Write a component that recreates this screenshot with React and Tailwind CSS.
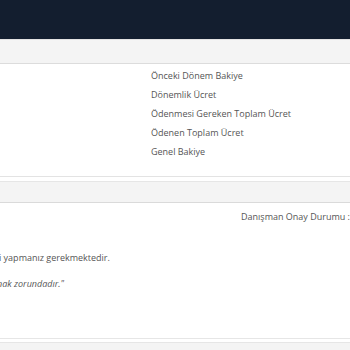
export default function App() {
  const rows = [
    'Önceki Dönem Bakiye',
    'Dönemlik Ücret',
    'Ödenmesi Gereken Toplam Ücret',
    'Ödenen Toplam Ücret',
    'Genel Bakiye',
  ]

  return (
    <div className="w-[350px] h-[350px] overflow-hidden bg-white text-[9px] text-[#555] font-['Open_Sans',sans-serif]">
      {/* Top bar */}
      <div className="h-[39px] bg-[#131e2f]" />

      {/* Fee panel */}
      <div className="border-t border-[#c9ccd0] border-b border-[#e3e3e3]">
        <div className="h-[24px] bg-[#f4f4f4] border-b border-[#dcdcdc]" />
        <div className="pt-[2px] pb-[15px] pl-[151px]">
          {rows.map(r => (
            <div key={r} className="h-[19px] leading-[19px] whitespace-nowrap">{r}</div>
          ))}
        </div>
      </div>

      {/* Approval panel */}
      <div className="mt-[4px] border-t border-[#e6e6e6] border-b border-[#dedede]">
        <div className="h-[21px] bg-[#f4f4f4] border-b border-[#dadada]" />
        <div className="h-[135px]">
          <div className="flex justify-end pt-[4px]">
            <span className="h-[19px] leading-[19px] whitespace-nowrap">Danışman Onay Durumu :</span>
          </div>
          <div className="overflow-hidden whitespace-nowrap">
            <p className="mt-[22px] leading-[19px] -ml-[1px]">i yapmanız gerekmektedir.</p>
            <p className="mt-[7px] leading-[19px] italic -ml-[3px]">nak zorundadır."</p>
          </div>
        </div>
      </div>
      <div className="mt-[3px] h-[10px] bg-[#f4f4f4] border-t border-[#e6e6e6]" />
    </div>
  )
}
